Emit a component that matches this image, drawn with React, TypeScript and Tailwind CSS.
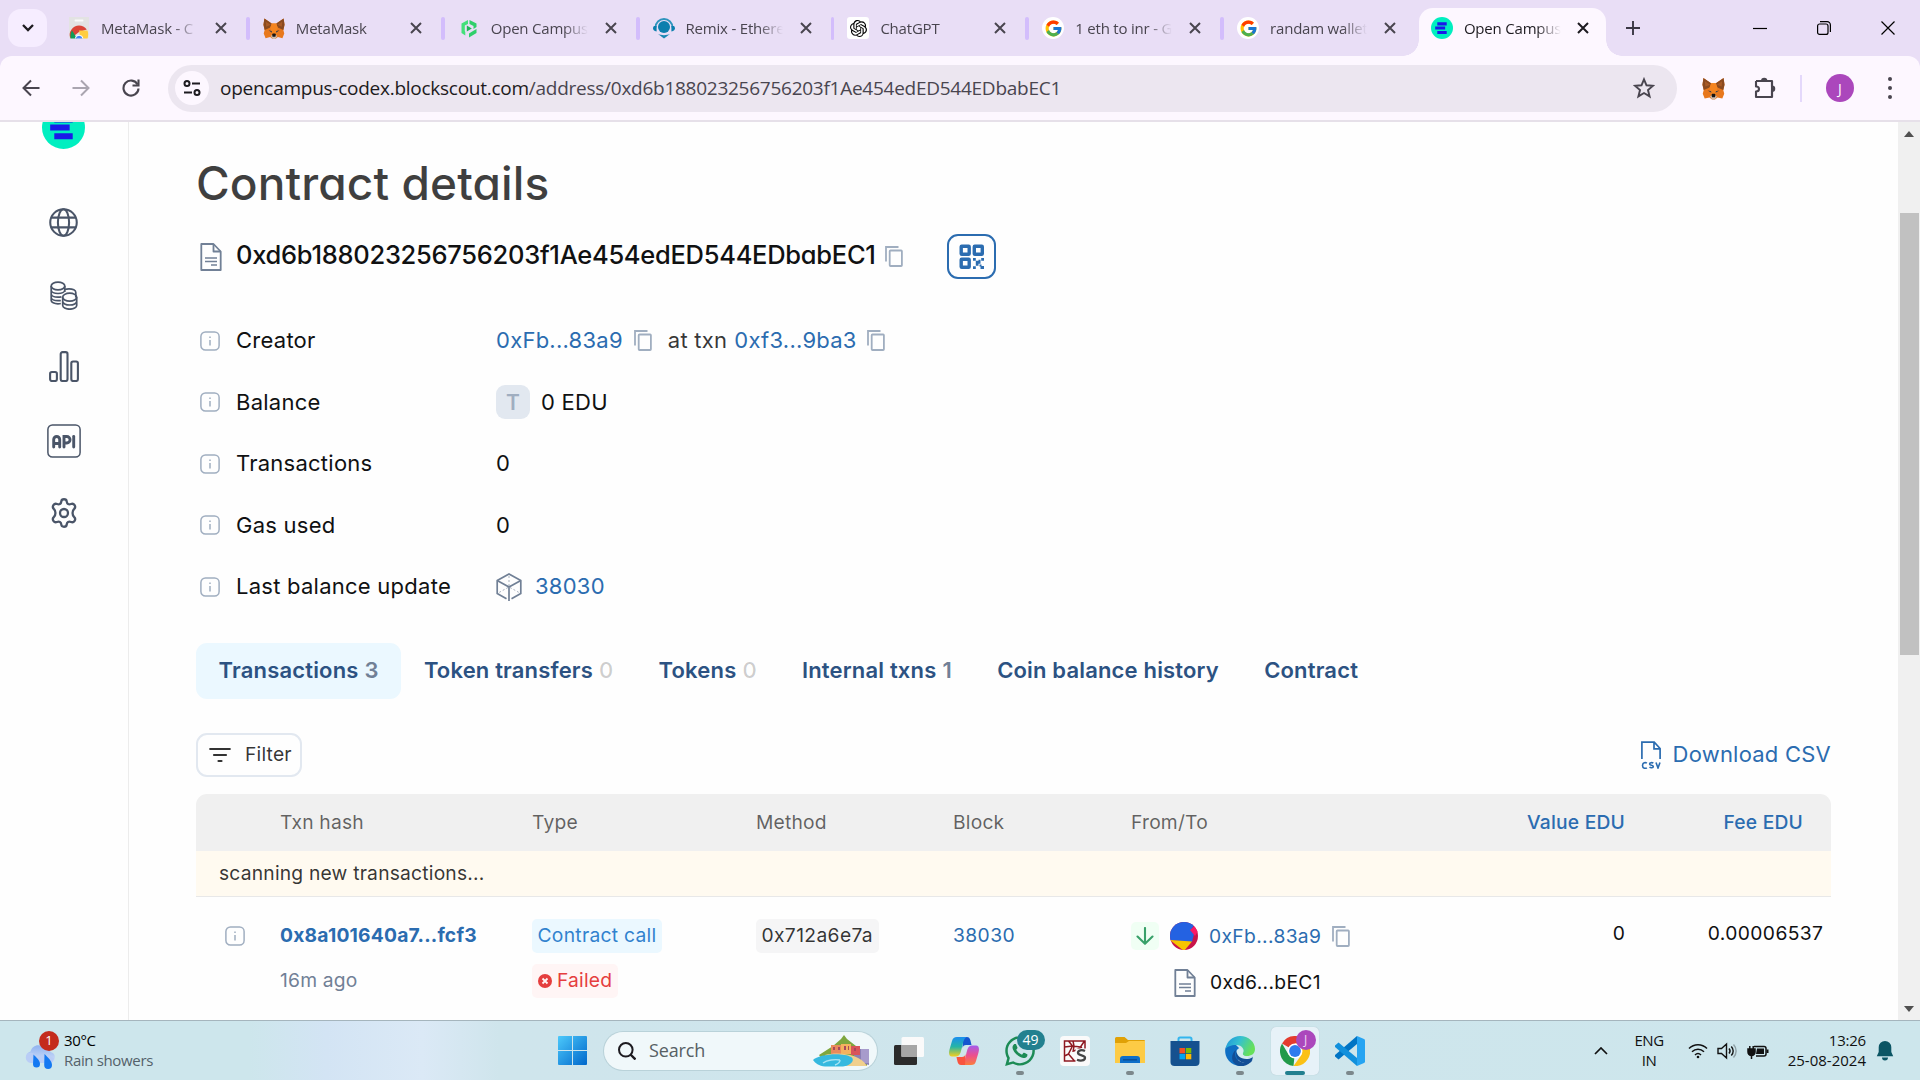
import React from "react";
import { SiOpenai } from "react-icons/si";
import { FcGoogle } from "react-icons/fc";
import { FaWhatsapp } from "react-icons/fa";

const SEGOE = "font-['Open_Sans','Noto_Sans',sans-serif]";
const INTER = "font-[Inter,sans-serif]";

/* ---------- brand marks ---------- */

function Fox({ className }: { className: string }) {
  return (
    <svg viewBox="0 0 24 24" className={className}>
      <path d="M1.5 1 9.5 6.5h5L22.500 1l1 7-1.300 5.500 1 4-2 5-5-1.200L13.500 23.500h-3l-2.700-2.200-5 1.200-2-5 1-4L.5 8z" fill="#e8781d" />
      <path d="M1.500 1 9.500 6.500 8 11 1.800 13.500.5 8zM22.500 1 14.500 6.500 16 11l6.200 2.500L23.500 8z" fill="#8a4a20" />
      <path d="M3 4.500 8.500 8 3.500 10zM21 4.500 15.500 8l5 2z" fill="#a85a26" />
      <path d="m8 11 1.500-4.500h5L16 11l-1.500 8h-5z" fill="#f5841f" />
      <path d="m6 14 3.500.8.3 1.700zM18 14l-3.500.8-.3 1.700z" fill="#2c3a4c" />
      <path d="m8.500 20 2-1h3l2 1-2 3.500h-3z" fill="#cdbdb0" />
      <path d="m10 18.500.6-1h2.800l.6 1-.4 2.500h-3.200z" fill="#161616" />
    </svg>
  );
}

function OpenCampus({ className }: { className: string }) {
  return (
    <svg viewBox="0 0 42 42" className={className}>
      <circle cx="21" cy="21" r="21" fill="#00efc0" />
      <path d="M12 10h18v6H12zM8 18h19v6H8zM12 26.500h18v6H12z" fill="#1a1ae8" />
    </svg>
  );
}

function WebStore({ className }: { className: string }) {
  return (
    <svg viewBox="0 0 22 22" className={className}>
      <path d="M1 0h20v20.500a1 1 0 0 1-1 1H2a1 1 0 0 1-1-1z" fill="#e3e3e3" />
      <path d="M7.500 3.500h7" stroke="#fafafa" strokeWidth="2" strokeLinecap="round" />
      <path d="M2.500 21.500a9 9 0 0 1 1-9C7 7 15 7 18.800 12.500L11 15z" fill="#db4437" />
      <path d="M2.700 21.500c-.8-3 .2-6.500 1.300-8.300l5 8.300z" fill="#0f9d58" />
      <path d="M11 13.500h8.500c1 2.500.8 5.500 0 8h-7z" fill="#ffcd40" />
      <path d="M6.800 21.500a4.400 4.400 0 0 1 8.600 0z" fill="#fff" />
      <path d="M7.700 21.500a3.500 3.500 0 0 1 6.800 0z" fill="#4285f4" />
    </svg>
  );
}

function GreenHex({ className }: { className: string }) {
  return (
    <svg viewBox="0 0 22 22" className={className}>
      <path d="M10 3 3.500 6.500v9.500l3.800 2.500V15L6.800 14V8.500L10 7z" fill="#43e07a" />
      <path d="M11.500 3 18.500 6.500v3.500L15.500 12V9L11.500 7zM18.500 12v4L11 20.500v-4l4-2.500z" fill="#2fcf6a" />
      <path d="m8.800 8.500 5 3-5 3z" fill="#1fb558" />
    </svg>
  );
}

function Remix({ className }: { className: string }) {
  return (
    <svg viewBox="0 0 22 22" className={className}>
      <circle cx="11" cy="9.500" r="6" fill="#0c7fae" />
      <path d="M2.500 10a8.500 8.500 0 0 1 17 0" fill="none" stroke="#2f94bd" strokeWidth="1.800" />
      <path d="M1 8.500h2.600v5.500C1 13.500 0 12 0 11s.5-2 1-2.500zM21 8.500h-2.600v5.500c2.600-.5 3.600-2 3.600-3s-.5-2-1-2.500z" fill="#0c7fae" />
      <path d="M5 16.500c3 1.500 9 1.500 12 0L11 21z" fill="#1b88b4" />
    </svg>
  );
}

function Favicon({ kind }: { kind: string }) {
  switch (kind) {
    case "store":
      return <WebStore className="size-[22px]" />;
    case "fox":
      return <Fox className="h-[23px] w-[23px]" />;
    case "green":
      return <GreenHex className="size-[22px]" />;
    case "remix":
      return <Remix className="size-[23px]" />;
    case "gpt":
      return (
        <span className="flex size-[22px] items-center justify-center rounded-[3px] bg-white">
          <SiOpenai className="size-[17px] text-black" />
        </span>
      );
    case "google":
      return (
        <span className="flex size-[22px] items-center justify-center rounded-full bg-white">
          <FcGoogle className="size-[19px]" />
        </span>
      );
    default:
      return <OpenCampus className="size-[22px]" />;
  }
}

/* ---------- browser chrome ---------- */

function CloseX({ className }: { className: string }) {
  return (
    <svg viewBox="0 0 12 12" className={className} fill="none" stroke="currentColor" strokeWidth="2">
      <path d="m1 1 10 10M11 1 1 11" />
    </svg>
  );
}

const TABS = [
  { icon: "store", title: "MetaMask - C" },
  { icon: "fox", title: "MetaMask" },
  { icon: "green", title: "Open Campus" },
  { icon: "remix", title: "Remix - Ethere" },
  { icon: "gpt", title: "ChatGPT" },
  { icon: "google", title: "1 eth to inr - G" },
  { icon: "google", title: "randam wallet" },
];

function TabTitle({ title, dark }: { title: string; dark?: boolean }) {
  return (
    <span
      className={
        "ml-[11px] w-[97px] shrink-0 overflow-hidden whitespace-nowrap text-[15px] tracking-[-0.200px] [mask-image:linear-gradient(to_right,black_75%,transparent)] " +
        (dark ? "text-[#1d1b20]" : "text-[#49454f]")
      }
    >
      {title}
    </span>
  );
}

function TabStrip() {
  return (
    <div className={`flex h-14 shrink-0 bg-[#e9def6] ${SEGOE}`}>
      <div className="mt-[9px] ml-2 flex h-[38px] w-[39px] shrink-0 items-center justify-center rounded-[13px] bg-[#f6edff]">
        <svg viewBox="0 0 12 8" className="h-2 w-3 text-[#1d1b20]" fill="none" stroke="currentColor" strokeWidth="2.300">
          <path d="m1 1 5 5 5-5" />
        </svg>
      </div>
      <div className="ml-2 flex">
        {TABS.map((t, i) => (
          <div key={i} className="flex h-14 w-[194.850px] items-center pl-[13px]">
            <span className="flex w-[22px] shrink-0 justify-center">
              <Favicon kind={t.icon} />
            </span>
            <TabTitle title={t.title} />
            <CloseX className="ml-[17px] size-[12px] shrink-0 text-[#49454f]" />
            {i < 6 && <span className="ml-[19px] h-[23px] w-1 rounded-full bg-[#d3bdfc]" />}
          </div>
        ))}
      </div>
      <div className="relative mt-2 flex h-12 w-[187px] items-center rounded-t-[14px] bg-[#fdf7ff] pb-2 pl-3">
        <span className="absolute bottom-0 -left-4 size-4 bg-[radial-gradient(circle_at_0_0,transparent_15.500px,#fdf7ff_16px)]" />
        <span className="absolute -right-4 bottom-0 size-4 bg-[radial-gradient(circle_at_100%_0,transparent_15.500px,#fdf7ff_16px)]" />
        <Favicon kind="campus" />
        <TabTitle title="Open Campus" dark />
        <CloseX className="ml-[16px] size-[12px] shrink-0 text-[#1d1b20]" />
      </div>
      <svg viewBox="0 0 14 14" className="mt-[21px] ml-[20px] size-[14px] text-[#3b3744]" fill="none" stroke="currentColor" strokeWidth="1.900">
        <path d="M7 0v14M0 7h14" />
      </svg>
      <div className="ml-auto flex h-14 items-center pr-[25px] text-black">
        <svg viewBox="0 0 14 14" className="size-[14px]" fill="none" stroke="currentColor" strokeWidth="1.200">
          <path d="M0 7.500h14" />
        </svg>
        <svg viewBox="0 0 14 14" className="ml-[50px] size-[14px]" fill="none" stroke="currentColor" strokeWidth="1.200">
          <rect x=".6" y="3" width="10.400" height="10.400" rx="2" />
          <path d="M3 .7h7.200a3.200 3.200 0 0 1 3.200 3.200V11" />
        </svg>
        <svg viewBox="0 0 14 14" className="ml-[50px] size-[14px]" fill="none" stroke="currentColor" strokeWidth="1.200">
          <path d="m.5.5 13 13M13.500.5l-13 13" />
        </svg>
      </div>
    </div>
  );
}

function Toolbar() {
  return (
    <div className="bg-[#e9def6]">
      <div className={`flex h-[66px] items-center rounded-t-[12px] border-b-2 border-[#e6e0e9] bg-[#fdf7ff] ${SEGOE}`}>
        <svg viewBox="0 0 18 18" className="ml-[22px] size-[18px] text-[#49454f]" fill="none" stroke="currentColor" strokeWidth="2">
          <path d="M17.500 9H2M9 1.500 1.500 9 9 16.500" />
        </svg>
        <svg viewBox="0 0 18 18" className="ml-[32px] size-[18px] text-[#aaa5b0]" fill="none" stroke="currentColor" strokeWidth="2">
          <path d="M.5 9H16M9 1.500 16.500 9 9 16.500" />
        </svg>
        <svg viewBox="0 0 18 18" className="ml-[32px] size-[18px] text-[#49454f]" fill="none" stroke="currentColor" strokeWidth="2.100">
          <path d="M15.600 5.500A7.500 7.500 0 1 0 16.500 9.500" />
          <path d="M16.500.5V6.500h-6" />
        </svg>
        <div className="ml-[28px] flex h-[47px] w-[1509px] items-center rounded-full bg-[#ece6f0]">
          <span className="ml-[7px] flex size-[34px] items-center justify-center rounded-full bg-[#fdf7ff]">
            <svg viewBox="0 0 18 16" className="h-4 w-[18px] text-[#1d1b20]" fill="none" stroke="currentColor" strokeWidth="2">
              <circle cx="4" cy="3.500" r="2.500" />
              <path d="M9 3.500h8M1 12.500h8" />
              <circle cx="14" cy="12.500" r="2.500" />
            </svg>
          </span>
          <span className="ml-[11px] text-[19px] tracking-[-0.260px] whitespace-nowrap text-[#49454f]">
            <span className="text-[#1d1b20]">opencampus-codex.blockscout.com</span>
            /address/0xd6b188023256756203f1Ae454edED544EDbabEC1
          </span>
          <svg viewBox="0 0 22 22" className="mr-[22px] ml-auto size-[22px] text-[#49454f]" fill="none" stroke="currentColor" strokeWidth="1.900">
            <path d="m11 2.300 2.500 6 6.500.5-5 4.200 1.600 6.400L11 16l-5.600 3.400L7 13 2 8.800l6.500-.5z" />
          </svg>
        </div>
        <Fox className="ml-[25px] size-[23px]" />
        <svg viewBox="0 0 24 24" className="ml-[28px] size-[24px] text-[#49454f]">
          <path d="M3 5h16v5.500M19 14.500V21H3v-5.500c4 0 4-5 0-5V5" fill="none" stroke="currentColor" strokeWidth="2.100" strokeLinejoin="round" />
          <path d="M19 5v16" stroke="currentColor" strokeWidth="2.100" />
          <path d="M8 5a3.200 3.200 0 0 1 6.400 0zM19 9.500a3 3 0 0 1 0 6.500z" fill="currentColor" />
        </svg>
        <span className="ml-[23px] h-[27px] w-[2px] bg-[#e4d8fb]" />
        <span className="ml-[24px] flex size-7 items-center justify-center rounded-full bg-[#ab47bc] text-[14px] text-white">J</span>
        <svg viewBox="0 0 4 24" className="ml-[34px] h-6 w-1 fill-[#49454f]">
          <circle cx="2" cy="3" r="2" />
          <circle cx="2" cy="12" r="2" />
          <circle cx="2" cy="21" r="2" />
        </svg>
      </div>
    </div>
  );
}

/* ---------- page icons ---------- */

function InfoIcon() {
  return (
    <svg viewBox="0 0 20 20" className="size-5 shrink-0 text-[#a0aec0]" fill="none" stroke="currentColor">
      <rect x=".9" y=".9" width="18.200" height="18.200" rx="4.500" strokeWidth="1.500" />
      <path d="M10 9v5.500M10 5.500v1.600" strokeWidth="1.500" />
    </svg>
  );
}

function CopyIcon({ className }: { className: string }) {
  return (
    <svg viewBox="0 0 18 21" className={"h-[21px] w-[18px] shrink-0 text-[#a0aec0] " + className} fill="none" stroke="currentColor" strokeWidth="1.800">
      <path d="M1 15.500V1h12.500" />
      <rect x="4.700" y="4.500" width="12.200" height="15.500" rx=".8" />
    </svg>
  );
}

function ContractIcon() {
  return (
    <svg viewBox="0 0 22 28" className="h-7 w-[22px] shrink-0 text-[#718096]" fill="none" stroke="currentColor" strokeWidth="1.800" strokeLinejoin="round">
      <path d="M1.300 1h12.200l7.200 7.500V27H1.300z" />
      <path d="M13.500 1v7.500h7.200" />
      <path d="M5 15h12M5 18.500h12M11 22h6" strokeWidth="1.500" />
    </svg>
  );
}

function BlockIcon() {
  return (
    <svg viewBox="0 0 26 28" className="h-7 w-[26px] shrink-0 text-[#718096]" fill="none" stroke="currentColor" strokeWidth="1.700">
      <path d="M10.500 25.700 1.200 20.500V7.500L13 1l11.800 6.500v13L15.500 25.700" />
      <path d="M1.200 7.500 13 14l11.800-6.500M13 14v14" />
      <path d="M13 3v10M12 14.500l-9 5M14 14.500l9 5" strokeWidth=".6" strokeDasharray="2 2" />
    </svg>
  );
}

function QrIcon() {
  return (
    <svg viewBox="0 0 26 26" className="size-[26px] text-[#2b6cb0]" fill="none" stroke="currentColor">
      <g strokeWidth="3.400">
        <rect x="2.200" y="2.200" width="8" height="8" rx=".5" />
        <rect x="15.300" y="2.200" width="8" height="8" rx=".5" />
        <rect x="2.200" y="15.300" width="8" height="8" rx=".5" />
      </g>
      <path
        d="M14 14h2.800v2.800H14zM22.200 14H25v2.800h-2.800zM16.800 16.800h2.700v-1h2v4h-2v2h-2.700zM14 22.200h2.800V25H14zM20.500 20.500h2V22H25v3h-3.500v-2.500h-1z"
        fill="currentColor"
        stroke="none"
      />
    </svg>
  );
}

/* ---------- sidebar ---------- */

function Sidebar() {
  return (
    <nav className="flex w-[129px] shrink-0 flex-col items-center border-r border-[#ececec] pr-px text-[#4a5568]">
      <div className="-mt-[16px] h-[43px]">
        <OpenCampus className="size-[43px]" />
      </div>
      <svg viewBox="0 0 28 28" className="mt-[59px] size-[29px]" fill="none" stroke="currentColor" strokeWidth="2">
        <circle cx="14" cy="14" r="12.800" />
        <ellipse cx="14" cy="14" rx="5.400" ry="12.800" />
        <path d="M2 9.300h24M2 18.700h24" />
      </svg>
      <svg viewBox="0 0 28 29" className="mt-[44px] h-[29px] w-[28px]" fill="none" stroke="currentColor" strokeWidth="1.700">
        <ellipse cx="8" cy="5" rx="6.800" ry="3.800" />
        <path d="M1.200 5v14.500c0 1.800 3 3.300 6.800 3.300 1 0 2-.1 2.800-.3M14.800 5v6M1.200 9c0 2 3 3.500 6.800 3.500s6.800-1.500 6.800-3.500M1.200 12.700c0 2 3 3.500 6.800 3.500 1.500 0 2.500-.1 3.500-.5M1.200 16.200c0 2 3 3.500 6.800 3.500 1 0 2 0 2.800-.2" />
        <path d="M14.800 8.600c1-.5 2.500-.8 4.200-.8 3.800 0 6.800 1.600 6.800 3.600v5" />
        <ellipse cx="19.700" cy="16.200" rx="7" ry="4" />
        <path d="M12.700 16.200v8.300c0 2 3 3.700 7 3.700s7-1.700 7-3.700v-8.300M12.700 20.300c0 2 3 3.700 7 3.700s7-1.700 7-3.700" />
      </svg>
      <svg viewBox="0 0 30 31" className="mt-[41px] h-[31px] w-[30px]" fill="none" stroke="currentColor" strokeWidth="2.100">
        <rect x="1.100" y="21" width="6.800" height="9" rx="1.800" />
        <rect x="11.700" y="1.100" width="6.800" height="28.900" rx="1.800" />
        <rect x="22.300" y="10.500" width="6.600" height="19.500" rx="1.800" />
      </svg>
      <svg viewBox="0 0 34 34" className="mt-[42px] size-[34px]" fill="none" stroke="currentColor">
        <rect x=".9" y=".9" width="32.200" height="32.200" rx="4.500" strokeWidth="1.500" />
        <g strokeWidth="2.900" strokeLinecap="round">
          <path d="M6.700 23v-7.500a3 3 0 0 1 6 0V23M6.700 19.500h6" />
          <path d="M17 23V12.500h2.800a3 3 0 0 1 0 6.500H17" />
          <path d="M26.700 12.500V23" />
        </g>
      </svg>
      <svg viewBox="0 0 28 30" className="mt-[40px] h-[30px] w-[28px]" fill="none" stroke="currentColor" strokeWidth="2.300" strokeLinejoin="round">
        <circle cx="14" cy="15" r="4" />
        <path d="M11.300 3.500c.3-3 5.100-3 5.400 0 .3 2.500 2 3.400 4.300 2.500 3-1.200 5.500 2.700 3.200 4.900-2.200 2-2.200 6.200 0 8.200 2.300 2.200-.2 6.100-3.200 4.900-2.300-.9-4 0-4.300 2.500-.3 3-5.100 3-5.400 0-.3-2.500-2-3.400-4.300-2.500-3 1.200-5.500-2.700-3.200-4.900 2.200-2 2.200-6.200 0-8.200C1.500 8.700 4 4.800 7 6c2.300.9 4 0 4.300-2.500z" />
      </svg>
    </nav>
  );
}

/* ---------- contract details ---------- */

function DetailRow({ label, children }: { label: string; children: React.ReactNode }) {
  return (
    <div className="flex h-[61.500px] items-center pl-1">
      <InfoIcon />
      <span className="ml-4 w-[260px] whitespace-nowrap">{label}</span>
      <div className="flex items-center whitespace-nowrap">{children}</div>
    </div>
  );
}

function Details() {
  return (
    <section className="mt-[31px] text-[22px] tracking-[0.250px] text-[#101112]">
      <DetailRow label="Creator">
        <span className="text-[#2b6cb0]">0xFb...83a9</span>
        <CopyIcon className="ml-[11px]" />
        <span className="ml-[16px] text-black/80">at txn</span>
        <span className="ml-[7px] text-[#2b6cb0]">0xf3...9ba3</span>
        <CopyIcon className="ml-[10px]" />
      </DetailRow>
      <DetailRow label="Balance">
        <span className="flex size-[34px] items-center justify-center rounded-[9px] bg-[#e2e8f0] text-[21px] font-semibold text-[#a0aec0]">T</span>
        <span className="ml-[11px]">0 EDU</span>
      </DetailRow>
      <DetailRow label="Transactions">0</DetailRow>
      <DetailRow label="Gas used">0</DetailRow>
      <DetailRow label="Last balance update">
        <BlockIcon />
        <span className="ml-[13px] text-[#2b6cb0]">38030</span>
      </DetailRow>
    </section>
  );
}

const SECTIONS = [
  { label: "Transactions", count: "3" },
  { label: "Token transfers", count: "0" },
  { label: "Tokens", count: "0" },
  { label: "Internal txns", count: "1" },
  { label: "Coin balance history" },
  { label: "Contract" },
];

function SectionTabs() {
  return (
    <div className="mt-[25px] flex text-[22px] font-semibold tracking-[0.170px]">
      {SECTIONS.map((s, i) => (
        <div
          key={s.label}
          className={
            "flex h-14 items-center rounded-[11px] px-[22.600px] whitespace-nowrap text-[#2c5282] " + (i === 0 ? "bg-[#ebf8ff]" : "")
          }
        >
          {s.label}
          {s.count && (
            <span className={"ml-[6px] " + (s.count === "0" ? "font-medium text-black/20" : "text-[#718096]")}>{s.count}</span>
          )}
        </div>
      ))}
    </div>
  );
}

const COLS = "grid grid-cols-[84px_252px_224px_197px_178px_1fr_206px]";

function TxTable() {
  return (
    <section className="mt-[17px] text-[19.250px] tracking-[0.200px]">
      <div className={`${COLS} h-[57px] items-center rounded-t-[11px] bg-[#f0f0f0] text-black/60`}>
        <span />
        <span>Txn hash</span>
        <span>Type</span>
        <span>Method</span>
        <span>Block</span>
        <div className="flex justify-between">
          <span>From/To</span>
          <span className="font-medium text-[#2b6cb0]">Value EDU</span>
        </div>
        <span className="pr-[28px] text-right font-medium text-[#2b6cb0]">Fee EDU</span>
      </div>
      <div className="flex h-[46px] items-center border-b border-[#e8e8e8] bg-[#fffaf0] pt-px pl-[23px] text-black/80">scanning new transactions...</div>
      <div className={`${COLS} pt-[22px]`}>
        <div className="flex h-[34px] items-center pl-[29px]">
          <InfoIcon />
        </div>
        <div>
          <div className="flex h-[34px] items-center font-bold text-[#2b6cb0]">0x8a101640a7...fcf3</div>
          <div className="mt-[11px] flex h-[34px] items-center text-[#718096]">16m ago</div>
        </div>
        <div className="flex flex-col items-start gap-[11px]">
          <span className="flex h-[34px] items-center rounded-[5px] bg-[#ebf8ff] px-[5.500px] tracking-[0.280px] text-[#3182ce]">Contract call</span>
          <span className="flex h-[34px] items-center rounded-[5px] bg-[#fff5f5] px-[6px] text-[#e53e3e]">
            <svg viewBox="0 0 14 14" className="mr-[5px] size-[14px]">
              <circle cx="7" cy="7" r="7" fill="currentColor" />
              <path d="m4.500 4.500 5 5m0-5-5 5" stroke="#fff5f5" strokeWidth="1.800" />
            </svg>
            Failed
          </span>
        </div>
        <div>
          <span className="inline-flex h-[34px] items-center rounded-[5px] bg-[#f5f5f6] px-[5.500px] tracking-[0.360px] text-black/80">0x712a6e7a</span>
        </div>
        <div className="flex h-[34px] items-center tracking-[0.400px] text-[#2b6cb0]">38030</div>
        <div className="flex justify-between">
          <div>
            <div className="flex h-[35px] items-center">
              <span className="flex size-7 items-center justify-center rounded-[5px] bg-[#f0fff4]">
                <svg viewBox="0 0 18 18" className="size-[18px] text-[#38a169]" fill="none" stroke="currentColor" strokeWidth="2.100" strokeLinecap="round" strokeLinejoin="round">
                  <path d="M9 1v15.500M1.500 9.500 9 16.800l7.500-7.300" />
                </svg>
              </span>
              <svg viewBox="0 0 28 28" className="ml-[11px] size-7 overflow-hidden rounded-full">
                <rect width="28" height="28" fill="#c8144a" />
                <path d="M0 0h26l-5 8 3 4-2 8L0 18z" fill="#2462e2" />
                <path d="m20 8 6-5 2 6-3 5z" fill="#fb1865" />
                <path d="m0 18 22 1.500L14 29z" fill="#f6c400" />
              </svg>
              <span className="ml-[11px] tracking-[0.340px] text-[#2b6cb0]">0xFb...83a9</span>
              <CopyIcon className="ml-[11px]" />
            </div>
            <div className="mt-[11px] flex h-[36px] items-center pl-[43px]">
              <ContractIcon />
              <span className="ml-[14px] tracking-[0.340px] text-[#101112]">0xd6...bEC1</span>
            </div>
          </div>
          <span className="flex h-[30px] items-center text-[#101112]">0</span>
        </div>
        <span className="flex h-[30px] items-center justify-end pr-[7.600px] tracking-[0.400px] text-[#101112]">0.00006537</span>
      </div>
    </section>
  );
}

function PageBody() {
  return (
    <main className="min-w-0 flex-1 pr-[67px] pl-[67px]">
      <h1 className="mt-[33px] h-[56px] text-[46px] leading-[56px] font-medium tracking-[0.100px] whitespace-nowrap text-black/75 [font-feature-settings:'cv11']">
        Contract details
      </h1>
      <div className="mt-[23px] flex h-[45px] items-center pl-1">
        <ContractIcon />
        <span className="mb-[2px] ml-[14px] w-[639px] text-[25.500px] font-medium tracking-[-0.280px] whitespace-nowrap text-[#101112] [font-feature-settings:'cv11']">
          0xd6b188023256756203f1Ae454edED544EDbabEC1
        </span>
        <CopyIcon className="ml-[10px]" />
        <span className="ml-[44px] flex h-[45px] w-[49px] items-center justify-center rounded-[11px] border-2 border-[#2b6cb0]">
          <QrIcon />
        </span>
      </div>
      <Details />
      <SectionTabs />
      <div className="mt-[34px] flex items-center justify-between">
        <div className="flex h-[44px] w-[106px] items-center rounded-[11px] border-2 border-[#e2e8f0] pl-[11px] text-[19.250px] tracking-[0.200px] text-black/80">
          <svg viewBox="0 0 22 16" className="h-4 w-[22px]" fill="none" stroke="currentColor" strokeWidth="2.200" strokeLinecap="round">
            <path d="M1.200 2h19.600M5 8h12M9.500 14h3" />
          </svg>
          <span className="ml-[14px]">Filter</span>
        </div>
        <div className="flex items-center text-[22px] tracking-[0.220px] text-[#2b6cb0]">
          <svg viewBox="0 0 20 28" className="h-7 w-5" fill="none" stroke="currentColor" strokeWidth="1.700">
            <path d="M.9 18V1.200h12.300L19.100 7.500V18M13 1v6.800h6.500" />
            <path
              d="M5.800 22.300c-1-1-4.300-1-4.300 2.200s3.300 3.200 4.300 2.200M12.300 22.200c-1-.8-3.700-.8-3.700.7 0 1.600 3.700.9 3.700 2.600 0 1.500-2.700 1.500-3.800.7M15 21.500l2 5.500 2-5.500"
              strokeWidth="1.600"
            />
          </svg>
          <span className="ml-3 whitespace-nowrap">Download CSV</span>
        </div>
      </div>
      <TxTable />
    </main>
  );
}

function Scrollbar() {
  return (
    <div className="flex w-[22px] shrink-0 flex-col items-center bg-[#f0f0f0]">
      <svg viewBox="0 0 10 6" className="mt-[9px] h-[6px] w-[10px] shrink-0 fill-[#505050]">
        <path d="M5 0l5 6H0z" />
      </svg>
      <span className="mt-[76px] h-[442px] w-[19px] bg-[#c1c1c1]" />
      <svg viewBox="0 0 10 6" className="mt-auto mb-[8px] h-[6px] w-[10px] shrink-0 fill-[#505050]">
        <path d="M0 0h10L5 6z" />
      </svg>
    </div>
  );
}

/* ---------- taskbar ---------- */

function Weather() {
  return (
    <div className="ml-[25px] flex w-[200px] shrink-0 items-center">
      <div className="relative h-[38px] w-[31px]">
        <svg viewBox="0 0 31 26" className="absolute top-[12px] left-0 h-[26px] w-[31px]">
          <defs>
            <linearGradient id="cloud" x1="0" y1="0" x2="0" y2="1">
              <stop offset="0" stopColor="#8fb2f0" />
              <stop offset="1" stopColor="#d5e1f9" />
            </linearGradient>
          </defs>
          <path d="M6 19a6 6 0 0 1-.5-11.500C7 1 15-1 19 4c4-1 6 1 6.500 4A5.600 5.600 0 0 1 25 19z" fill="url(#cloud)" />
          <path d="M2 9.500c5-2 9.500.5 10 5 3-4 11-5 17 0-.5 3-2 4.500-4 4.500H6c-4 0-7-5-4-9.500z" fill="#b9cdf6" />
          <path d="M8.500 10.500c3 3 6.500 6 6.500 9.500a3.500 3.500 0 0 1-7 0zM19.500 10c3.500 3.500 7.500 7 7.500 11a3.900 3.900 0 0 1-7.800 0z" fill="#1479f2" />
        </svg>
        <span className="absolute -top-[1px] left-[14px] flex size-5 items-center justify-center rounded-full bg-[#c42b1c] text-[13px] text-white">1</span>
      </div>
      <div className="mb-[2px] ml-2 leading-5 tracking-[-0.350px]">
        <div className="text-black">30°C</div>
        <div className="text-[#54616a]">Rain showers</div>
      </div>
    </div>
  );
}

function ChromeMark() {
  return (
    <svg viewBox="0 0 30 30" className="size-[30px]">
      <path d="M15 15 2 7.500A15 15 0 0 1 28 7.500H15z" fill="#e33b2e" />
      <path d="M15 15 13.500 30A15 15 0 0 1 2 7.500l6.500 11z" fill="#229a4a" />
      <path d="M15 7.500h13A15 15 0 0 1 13.500 30L21.500 18.700z" fill="#fbc116" />
      <circle cx="15" cy="15" r="7.500" fill="#fff" />
      <circle cx="15" cy="15" r="5.900" fill="#2f7bee" />
    </svg>
  );
}

function AppSlot({ children, running, active }: { children: React.ReactNode; running?: boolean; active?: boolean }) {
  return (
    <div className={"relative mx-[3.500px] flex size-12 items-center justify-center rounded-[5px] " + (active ? "bg-[#e7f2f8] shadow-[0_0_1px_#a7bcc4]" : "")}>
      {children}
      {running && !active && <span className="absolute bottom-0 left-5 h-1 w-2 rounded-full bg-[#7c888c]" />}
      {active && <span className="absolute bottom-0 left-[14px] h-1 w-5 rounded-full bg-[#22808f]" />}
    </div>
  );
}

function Taskbar() {
  return (
    <footer className={`flex h-[60px] shrink-0 items-center border-t border-[#a5b5bd] bg-[linear-gradient(90deg,#cde6ec_0%,#cde6ec_13%,#d3e4f4_17%,#dbe9f6_22%,#cfe5ec_26%,#cde6ec_100%)] text-[15px] ${SEGOE}`}>
      <Weather />
      <svg viewBox="0 0 29 29" className="ml-[333px] size-[29px] shrink-0">
        <defs>
          <linearGradient id="win" x1="0" y1="0" x2="1" y2="1">
            <stop offset="0" stopColor="#4cc9fb" />
            <stop offset="1" stopColor="#0067cb" />
          </linearGradient>
        </defs>
        <path d="M1 0h13v14H0V1a1 1 0 0 1 1-1zM15 0h13a1 1 0 0 1 1 1v13H15zM0 15h14v14H1a1 1 0 0 1-1-1zM15 15h14v13a1 1 0 0 1-1 1H15z" fill="url(#win)" />
      </svg>
      <div className="ml-[17px] flex h-[38px] w-[273px] shrink-0 items-center rounded-full bg-[#f0f8fa] shadow-[0_0_0_1px_#b9d2d9]">
        <svg viewBox="0 0 18 18" className="ml-[14px] size-[18px] text-[#1d1b20]" fill="none" stroke="currentColor" strokeWidth="2">
          <circle cx="7.800" cy="7.800" r="6.800" />
          <path d="m12.500 12.500 5 5" strokeWidth="2.400" />
        </svg>
        <span className="ml-[13px] text-[18px] tracking-[-0.150px] text-[#566064]">Search</span>
        <svg viewBox="0 0 58 32" className="mr-[6px] ml-auto h-8 w-[58px]">
          <path d="M6 20 20 11l8-7 3-4 3 4 9 7 11 10v10H14z" fill="#7ea63e" />
          <path d="M40 14h16v16l-14-4z" fill="#8b7fb5" />
          <path d="M48 14h8v14h-8z" fill="#a79bcc" />
          <path d="M18 10h13v9H18z" fill="#e98a5c" />
          <path d="M28 9h10v10H28z" fill="#f3b25e" />
          <path d="M38 11h9v9h-9z" fill="#d9545a" />
          <path d="M20 12h2v3h-2zM25 12h2v3h-2zM31 11h2v4h-2zM35 11h1v4h-1zM41 13h2v3h-2z" fill="#a8485a" />
          <path d="M12 20c12-3 34-2 42 11H20z" fill="#f0cf8c" />
          <path d="M0 25c5-6 30-8 38-3 5 3-1 9-8 9.500H12C6 31 2 28 0 25z" fill="#36b9df" />
          <path d="M10 28c4-3 12-4 17-3M22 30c3-1 5-3 5-5" fill="none" stroke="#a8e4f3" strokeWidth="1.400" />
        </svg>
      </div>
      <svg viewBox="0 0 30 28" className="ml-[17px] h-7 w-[30px] shrink-0">
        <rect y="8" width="23" height="20" rx="1.500" fill="#2b2b2b" />
        <rect x="7.500" width="22.500" height="20" rx="1.500" fill="#fafafa" />
        <path d="M7.500 8H23v12H7.500z" fill="#a6a6a6" />
      </svg>
      <svg viewBox="0 0 30 28" className="mr-[13px] ml-[25px] h-7 w-[30px] shrink-0">
        <defs>
          <linearGradient id="cpA" x1="0" y1="0" x2="0" y2="1">
            <stop offset="0" stopColor="#1a8df0" />
            <stop offset=".5" stopColor="#25b5a5" />
            <stop offset="1" stopColor="#f5d01e" />
          </linearGradient>
          <linearGradient id="cpB" x1="0" y1="0" x2="0" y2="1">
            <stop offset="0" stopColor="#a45bec" />
            <stop offset=".5" stopColor="#ec4f8e" />
            <stop offset="1" stopColor="#fb7d3c" />
          </linearGradient>
        </defs>
        <path d="M14 0h4c3 0 3.500 3 4.500 8H17c-2 0-3 1-3.500 3z" fill="#1555cf" />
        <path d="M8 0h10c-3 1-3.500 4-5 10-1.500 6-2 9.500-6 9.500H3c-3 0-3.500-3-2.500-7L3 4c1-3 2-4 5-4z" fill="url(#cpA)" />
        <path d="M22 28H12c3-1 3.500-4 5-10 1.500-6 2-9.500 6-9.500h4c3 0 3.500 3 2.500 7L27 24c-1 3-2 4-5 4z" fill="url(#cpB)" />
        <path d="M16 28h-4c-3 0-3.500-3-4.500-8H13c2 0 3-1 3.500-3z" fill="#f9543f" />
      </svg>
      <div className="flex items-center">
        <AppSlot running>
          <FaWhatsapp className="size-[34px] text-[#1c8b55]" />
          <span className="absolute top-[3px] left-[21px] flex h-5 w-[28px] items-center justify-center rounded-full bg-[#22808f] text-[14px] text-white">49</span>
        </AppSlot>
        <AppSlot>
          <svg viewBox="0 0 30 30" className="size-[30px]">
            <rect width="30" height="30" rx="4" fill="#fafafa" />
            <path d="M4.500 5H25v20H4.500zM4.500 11l8-1 8 1 4-6M12.500 10l-4-5M12.500 10l-4 8 6 7M8.500 18l-4 2M14 15l8-4M13 5l1 5-1 6" fill="none" stroke="#8e1820" strokeWidth="1.500" />
            <path d="M15.500 12.500h11v14h-11z" fill="#fafafa" />
            <path d="M25 15c-3-1.500-7-1-7 1.700 0 3.300 7 2 7 5 0 3.300-5 3.300-8 2" fill="none" stroke="#454545" strokeWidth="2.300" />
          </svg>
        </AppSlot>
        <AppSlot running>
          <svg viewBox="0 0 30 27" className="h-[27px] w-[30px]">
            <path d="M0 1.500A1.500 1.500 0 0 1 1.500 0h8L13 3h16a1 1 0 0 1 1 1v6H0z" fill="#e0a106" />
            <path d="M0 6h11l3-2h16v22H0z" fill="#fdcb45" />
            <path d="M5 26v-4a3 3 0 0 1 3-3h14a3 3 0 0 1 3 3v4z" fill="#0f6fc9" />
            <path d="M8 22.800h14" stroke="#0b4a90" strokeWidth="1.300" />
          </svg>
        </AppSlot>
        <AppSlot>
          <svg viewBox="0 0 30 30" className="size-[30px]">
            <path d="M8.500 5V3A1.500 1.500 0 0 1 10 1.500h10A1.500 1.500 0 0 1 21.500 3v2" fill="none" stroke="#33b5ee" strokeWidth="2" />
            <path d="M.5 5h29v21a4 4 0 0 1-4 4h-21a4 4 0 0 1-4-4z" fill="#15518f" />
            <path d="M9.500 12H15v5.300H9.500z" fill="#f25022" />
            <path d="M15.800 12h5.500v5.300h-5.500z" fill="#7fba00" />
            <path d="M9.500 18H15v5.300H9.500z" fill="#00a4ef" />
            <path d="M15.800 18h5.500v5.300h-5.500z" fill="#ffb900" />
          </svg>
        </AppSlot>
        <AppSlot running>
          <svg viewBox="0 0 30 30" className="size-[30px]">
            <defs>
              <linearGradient id="edgeTop" x1="0" y1="0" x2="1" y2=".4">
                <stop offset="0" stopColor="#1c8fdc" />
                <stop offset=".5" stopColor="#35c1d0" />
                <stop offset="1" stopColor="#66e05a" />
              </linearGradient>
            </defs>
            <path d="M.3 13C1 9 6 8 11 9l4 4-2 14 2 3A15 15 0 0 1 .3 13z" fill="#0f6fc4" />
            <path d="M.3 13C2 5 8 0 15 0c8.500 0 15 6 15 13 0 5-4 7-8 7-3.500 0-5-1.500-4-3 2-3-.5-8-7-8C6 9 2 11 .3 13z" fill="url(#edgeTop)" />
            <path d="M10 18c0 6 6 9 11 8.500 3-.3 5-1.500 6.500-2.500C24 29.500 18 31 13 29.800 5 27 6 17 11 14z" fill="#124e96" />
            <path d="M11 19c0-3 1-5 3.500-5 2 0 3 1.500 2.500 3-.5 4 5 6 10.500 3.800C28 22 27.500 24 26 26c-5 3-14 0-15-7z" fill="#124e96" />
            <path d="M17.800 17c.8-2-.5-5-3.300-5-1.500.5-2.500 1.500-3 3 0 4 4 8.500 11 8 3-.2 5-1.500 5.500-2.500-4 1.500-11 .500-10.200-3.500z" fill="#d3ebf1" />
          </svg>
        </AppSlot>
        <AppSlot active>
          <ChromeMark />
          <span className="absolute top-[3px] left-[25px] flex size-5 items-center justify-center rounded-full bg-[#ab47bc] text-[12px] text-[#f0d6f4]">J</span>
        </AppSlot>
        <AppSlot running>
          <svg viewBox="0 0 30 30" className="size-[30px]">
            <path d="M22 0v8L3.500 23.500 0 20.500v-1.500z" fill="#0074c4" />
            <path d="M22 30v-8L3.500 6.500 0 9.500V11z" fill="#1190dc" />
            <path d="m22 0 7 3a2 2 0 0 1 1 1.500v21a2 2 0 0 1-1 1.500l-7 3z" fill="#26a4f2" />
          </svg>
        </AppSlot>
      </div>
      <div className="ml-auto flex items-center pr-[26px] text-[#111]">
        <svg viewBox="0 0 14 8" className="mr-[26px] h-2 w-[14px]" fill="none" stroke="currentColor" strokeWidth="1.700">
          <path d="m1 7 6-6 6 6" />
        </svg>
        <div className="mr-[24px] mb-[2px] text-center leading-5 tracking-[-0.400px]">
          <div>ENG</div>
          <div>IN</div>
        </div>
        <svg viewBox="0 0 20 16" className="h-4 w-5" fill="none" stroke="currentColor" strokeWidth="1.500">
          <path d="M1 5.500c5-5 13-5 18 0" />
          <path d="M4 8.800c3.500-3.500 8.500-3.500 12 0M7 12c2-2 4-2 6 0" />
          <circle cx="10" cy="14" r="1.300" fill="currentColor" stroke="none" />
        </svg>
        <svg viewBox="0 0 20 18" className="ml-[9px] h-[18px] w-5" fill="none" stroke="currentColor" strokeWidth="1.400">
          <path d="M1 6.500v5h3.500L9.500 16V2L4.500 6.500zM12 6.500c1.300 1.500 1.300 3.500 0 5M14.300 4.500c2.500 2.600 2.500 6.400 0 9" />
          <path d="M16.500 2.500c3.500 3.700 3.500 9.300 0 13" stroke="#8fa0a6" />
        </svg>
        <svg viewBox="0 0 22 18" className="ml-[10px] h-[18px] w-[22px]" fill="none" stroke="currentColor" strokeWidth="1.500">
          <path d="M7 4.500h10a2 2 0 0 1 2 2v5.500a2 2 0 0 1-2 2h-8" />
          <path d="M10 6.500h7v5.500H9z" fill="currentColor" stroke="none" />
          <path d="M20.500 7.500v3.500" strokeWidth="2" />
          <path d="M1 7h7v3a3.500 3.500 0 0 1-7 0zM2.800 4v3M6.200 4v3M4.500 13v4" fill="currentColor" />
        </svg>
        <div className="mb-[2px] ml-[19px] text-right leading-5">
          <div className="tracking-[-0.200px]">13:26</div>
          <div>25-08-2024</div>
        </div>
        <svg viewBox="0 0 18 20" className="ml-[10px] h-5 w-[18px] fill-[#0b5564]">
          <path d="M9 0a6.300 6.300 0 0 0-6.300 6.300V11L.8 15.200h16.400L15.300 11V6.300A6.300 6.300 0 0 0 9 0zM6 16.500a3 3 0 0 0 6 0z" />
        </svg>
      </div>
    </footer>
  );
}

export default function App() {
  return (
    <div className="flex h-[1080px] w-[1920px] flex-col overflow-hidden bg-white">
      <TabStrip />
      <Toolbar />
      <div className={`flex min-h-0 flex-1 overflow-hidden bg-[#fefefe] ${INTER}`}>
        <Sidebar />
        <PageBody />
        <Scrollbar />
      </div>
      <Taskbar />
    </div>
  );
}
